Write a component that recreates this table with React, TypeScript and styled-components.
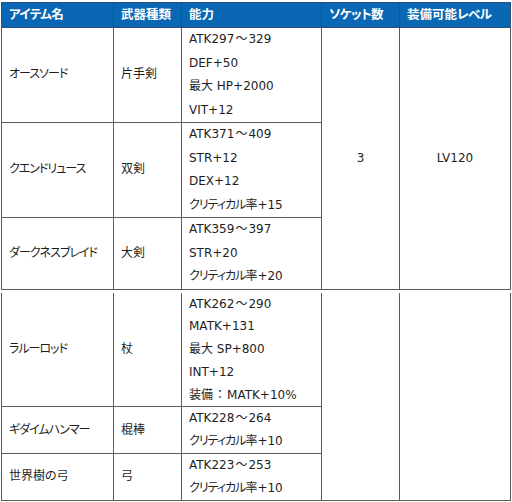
import React from 'react';
import styled, { createGlobalStyle } from 'styled-components';

const GlobalStyle = createGlobalStyle`
  body {
    margin: 0;
    background: #ffffff;
  }
`;

const Wrapper = styled.div`
  padding: 2px 2px 0 1px;
  font-family: 'DejaVu Sans', 'Noto Sans CJK JP', sans-serif;
  font-size: 12px;
  color: #1e1e1e;
  font-feature-settings: 'palt';
`;

const Table = styled.table<{ $gap?: boolean; $lh: number }>`
  --lh: ${(p) => p.$lh}px;
  width: 509px;
  border-collapse: collapse;
  table-layout: fixed;
  margin-top: ${(p) => (p.$gap ? '3px' : '0')};
  line-height: ${(p) => p.$lh}px;
`;

const HeadCell = styled.th`
  background: #0a67b4;
  color: #ffffff;
  font-weight: bold;
  font-size: 12.5px;
  line-height: 16px;
  text-align: left;
  height: 24px;
  padding: 0 0 0 7px;
  border: 1px solid #2b4f78;
`;

const Cell = styled.td<{ $center?: boolean; $noTop?: boolean }>`
  border: 1px solid #5c5c5c;
  border-top: ${(p) => (p.$noTop ? 'none' : '1px solid #5c5c5c')};
  padding: 0 0 0 ${(p) => (p.$center ? '0' : '7px')};
  text-align: ${(p) => (p.$center ? 'center' : 'left')};
  vertical-align: middle;
`;

const Line = styled.div`
  height: var(--lh);
  white-space: nowrap;
`;

const Kana = styled.span<{ $tight: number }>`
  letter-spacing: ${(p) => p.$tight}px;
`;

const Sym = styled.span`
  font-family: 'Noto Sans CJK JP', sans-serif;
  font-feature-settings: normal;
  line-height: 1;
  margin: 0 1px;
`;

// katakana runs are set a little tighter, like the proportional kana of the original
const Jp = ({ text, tight = -1 }: { text: string; tight?: number }) => (
  <>
    {text.split(/([\u30a0-\u30ff]+|[～：])/).map((part, i) => {
      if (!part) return null;
      if (part === '～' || part === '：') return <Sym key={i}>{part}</Sym>;
      if (/^[\u30a0-\u30ff]+$/.test(part))
        return (
          <Kana key={i} $tight={tight}>
            {part}
          </Kana>
        );
      return <React.Fragment key={i}>{part}</React.Fragment>;
    })}
  </>
);

type Item = { name: string; type: string; stats: string[] };

const upper: Item[] = [
  { name: 'オースソード', type: '片手剣', stats: ['ATK297～329', 'DEF+50', '最大 HP+2000', 'VIT+12'] },
  { name: 'クエンドリュース', type: '双剣', stats: ['ATK371～409', 'STR+12', 'DEX+12', 'クリティカル率+15'] },
  { name: 'ダークネスブレイド', type: '大剣', stats: ['ATK359～397', 'STR+20', 'クリティカル率+20'] },
];

const lower: Item[] = [
  { name: 'ラルーロッド', type: '杖', stats: ['ATK262～290', 'MATK+131', '最大 SP+800', 'INT+12', '装備：MATK+10%'] },
  { name: 'ギダイムハンマー', type: '棍棒', stats: ['ATK228～264', 'クリティカル率+10'] },
  { name: '世界樹の弓', type: '弓', stats: ['ATK223～253', 'クリティカル率+10'] },
];

const headers = ['アイテム名', '武器種類', '能力', 'ソケット数', '装備可能レベル'];

const Cols = () => (
  <colgroup>
    <col style={{ width: 112 }} />
    <col style={{ width: 68 }} />
    <col style={{ width: 140 }} />
    <col style={{ width: 78 }} />
    <col style={{ width: 111 }} />
  </colgroup>
);

const Rows = ({ items, socket, level, noTop }: { items: Item[]; socket: string; level: string; noTop?: boolean }) => (
  <>
    {items.map((it, i) => (
      <tr key={it.name}>
        <Cell $noTop={noTop && i === 0}>
          <Jp text={it.name} />
        </Cell>
        <Cell $noTop={noTop && i === 0}>{it.type}</Cell>
        <Cell $noTop={noTop && i === 0}>
          {it.stats.map((s, j) => (
            <Line key={j}>
              <Jp text={s} />
            </Line>
          ))}
        </Cell>
        {i === 0 && (
          <>
            <Cell $center $noTop={noTop} rowSpan={items.length}>
              {socket}
            </Cell>
            <Cell $center $noTop={noTop} rowSpan={items.length}>
              {level}
            </Cell>
          </>
        )}
      </tr>
    ))}
  </>
);

export default function App() {
  return (
    <Wrapper>
      <GlobalStyle />
      <Table $lh={23.5}>
        <Cols />
        <thead>
          <tr>
            {headers.map((h) => (
              <HeadCell key={h}>
                <Jp text={h} tight={-0.6} />
              </HeadCell>
            ))}
          </tr>
        </thead>
        <tbody>
          <Rows items={upper} socket="3" level="LV120" />
        </tbody>
      </Table>
      <Table $gap $lh={22.8}>
        <Cols />
        <tbody>
          <Rows items={lower} socket="" level="" noTop />
        </tbody>
      </Table>
    </Wrapper>
  );
}
